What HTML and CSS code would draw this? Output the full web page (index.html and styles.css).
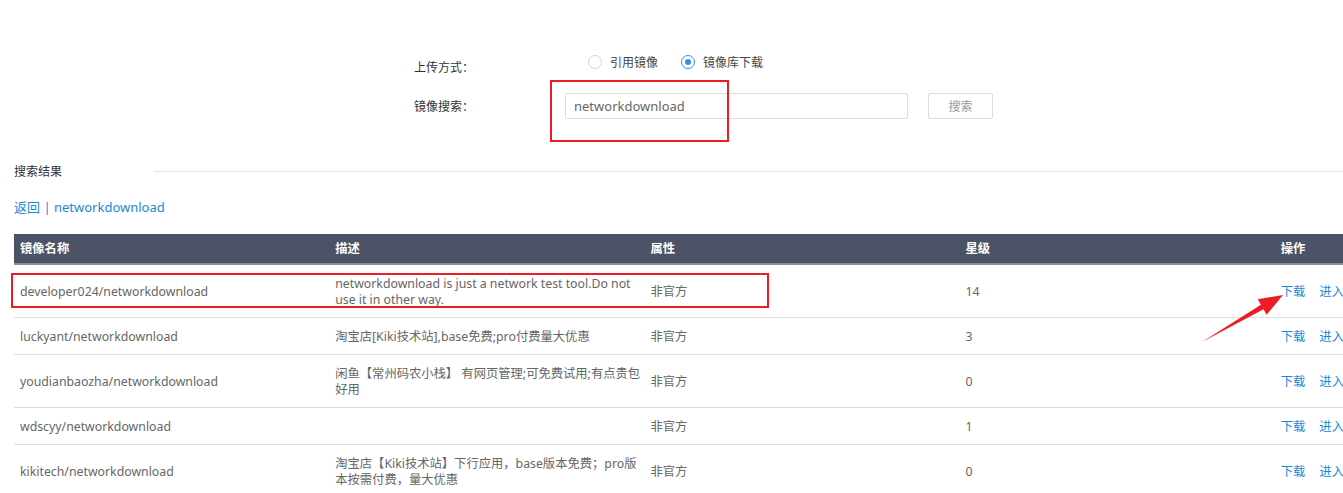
FILE: index.html
```html
<!DOCTYPE html>
<html lang="zh-CN">
<head>
  <meta charset="UTF-8">
  <meta name="viewport" content="width=device-width, initial-scale=1.0">
  <title>镜像库下载</title>
  <link rel="stylesheet" href="styles.css">
</head>
<body>
  <div class="page">
    <div class="upload-form">
      <div class="form-row row-type">
        <span class="form-label">上传方式：</span>
        <div class="radios">
          <label class="radio"><span class="radio-dot"></span>引用镜像</label>
          <label class="radio checked"><span class="radio-dot"></span>镜像库下载</label>
        </div>
      </div>
      <div class="form-row row-search">
        <span class="form-label">镜像搜索：</span>
        <input type="text" class="search-input" value="networkdownload">
        <button class="search-btn">搜索</button>
      </div>
    </div>

    <div class="result-title">
      <span>搜索结果</span>
      <div class="title-line"></div>
    </div>

    <div class="breadcrumb">
      <a href="#">返回</a> | <a href="#">networkdownload</a>
    </div>

    <table class="image-table">
      <colgroup>
        <col><col><col><col><col>
      </colgroup>
      <tr>
        <th>镜像名称</th>
        <th>描述</th>
        <th>属性</th>
        <th>星级</th>
        <th>操作</th>
      </tr>
      <tr>
        <td>developer024/networkdownload</td>
        <td class="desc">networkdownload is just a network test tool.Do not use it in other way.</td>
        <td>非官方</td>
        <td>14</td>
        <td class="ops"><a href="#">下载</a><a href="#">进入</a></td>
      </tr>
      <tr>
        <td>luckyant/networkdownload</td>
        <td class="desc">淘宝店[Kiki技术站],base免费;pro付费量大优惠</td>
        <td>非官方</td>
        <td>3</td>
        <td class="ops"><a href="#">下载</a><a href="#">进入</a></td>
      </tr>
      <tr>
        <td>youdianbaozha/networkdownload</td>
        <td class="desc">闲鱼【常州码农小栈】 有网页管理;可免费试用;有点贵包好用</td>
        <td>非官方</td>
        <td>0</td>
        <td class="ops"><a href="#">下载</a><a href="#">进入</a></td>
      </tr>
      <tr>
        <td>wdscyy/networkdownload</td>
        <td class="desc"></td>
        <td>非官方</td>
        <td>1</td>
        <td class="ops"><a href="#">下载</a><a href="#">进入</a></td>
      </tr>
      <tr>
        <td>kikitech/networkdownload</td>
        <td class="desc">淘宝店【Kiki技术站】下行应用，base版本免费；pro版本按需付费，量大优惠</td>
        <td>非官方</td>
        <td>0</td>
        <td class="ops"><a href="#">下载</a><a href="#">进入</a></td>
      </tr>
    </table>

    <!-- 标注 -->
    <div class="mark mark-input"></div>
    <div class="mark mark-row"></div>
    <svg class="mark-arrow" width="100" height="70" viewBox="0 0 100 70">
      <polygon points="4,64 62.9,26.8 59.7,21.2 85,17 68.7,36.8 65.5,31.2" fill="#ee1c25"/>
    </svg>
  </div>
</body>
</html>
```

FILE: styles.css
```css
html {
  overflow: hidden;
}
body {
  margin: 0;
  font-family: "Noto Sans", "Noto Sans CJK SC", sans-serif;
  font-size: 12px;
  color: #555;
  background-color: #fff;
}
a {
  color: #1a88d6;
  text-decoration: none;
}
.page {
  position: relative;
  padding: 45px 0 0 14px;
}
.upload-form {
  margin-left: 400px;
}
.form-row {
  display: flex;
  align-items: center;
}
.form-label {
  width: 151px;
  color: #333;
}
.row-type {
  height: 34px;
}
.row-type .form-label {
  padding-top: 10px;
}
.radios {
  display: flex;
  gap: 23px;
  padding-left: 23px;
}
.radio {
  display: flex;
  align-items: center;
  gap: 8px;
  color: #444;
}
.radio-dot {
  width: 12px;
  height: 12px;
  border: 1px solid #d4d4d4;
  border-radius: 50%;
  position: relative;
}
.checked .radio-dot {
  border-color: #3b8ee0;
}
.checked .radio-dot::after {
  content: "";
  position: absolute;
  left: 3px;
  top: 3px;
  width: 6px;
  height: 6px;
  border-radius: 50%;
  background-color: #3b8ee0;
}
.row-search {
  margin-top: 14px;
}
.search-input {
  width: 343px;
  height: 26px;
  padding: 0 8px;
  border: 1px solid #ddd;
  border-radius: 2px;
  font-family: inherit;
  font-size: 13px;
  color: #666;
  box-sizing: border-box;
}
.search-btn {
  margin-left: 20px;
  width: 65px;
  height: 26px;
  background-color: #fff;
  border: 1px solid #ddd;
  border-radius: 2px;
  font-family: inherit;
  font-size: 12px;
  color: #999;
}
.result-title {
  display: flex;
  align-items: center;
  margin-top: 43px;
  color: #333;
}
.title-line {
  flex: 1;
  margin-left: 92px;
  border-top: 1px solid #e5e5e5;
}
.breadcrumb {
  margin-top: 17px;
  font-size: 13px;
  color: #1a88d6;
}
.image-table {
  margin-top: 18px;
  width: 1576px;
  table-layout: fixed;
  border-collapse: collapse;
  font-size: 12.3px;
}
.image-table col {
  width: 315.2px;
}
.image-table th {
  background-color: #4d5366;
  color: #fff;
  text-align: left;
  font-weight: bold;
  padding: 7px 6px 6px;
  line-height: 16px;
  border-bottom: 2px solid #8a8f9c;
}
.image-table td {
  padding: 11px 6px 9px;
  line-height: 16px;
  border-bottom: 1px solid #ddd;
  vertical-align: middle;
  color: #666;
}
.image-table .desc {
  padding-right: 2px;
}
.ops a {
  margin-right: 14px;
}
.mark {
  position: absolute;
  border: 2px solid #ec1c24;
}
.mark-input {
  left: 550px;
  top: 80px;
  width: 175px;
  height: 58px;
}
.mark-row {
  left: 11px;
  top: 273px;
  width: 754px;
  height: 31px;
}
.mark-arrow {
  position: absolute;
  left: 1198px;
  top: 278px;
}
```
